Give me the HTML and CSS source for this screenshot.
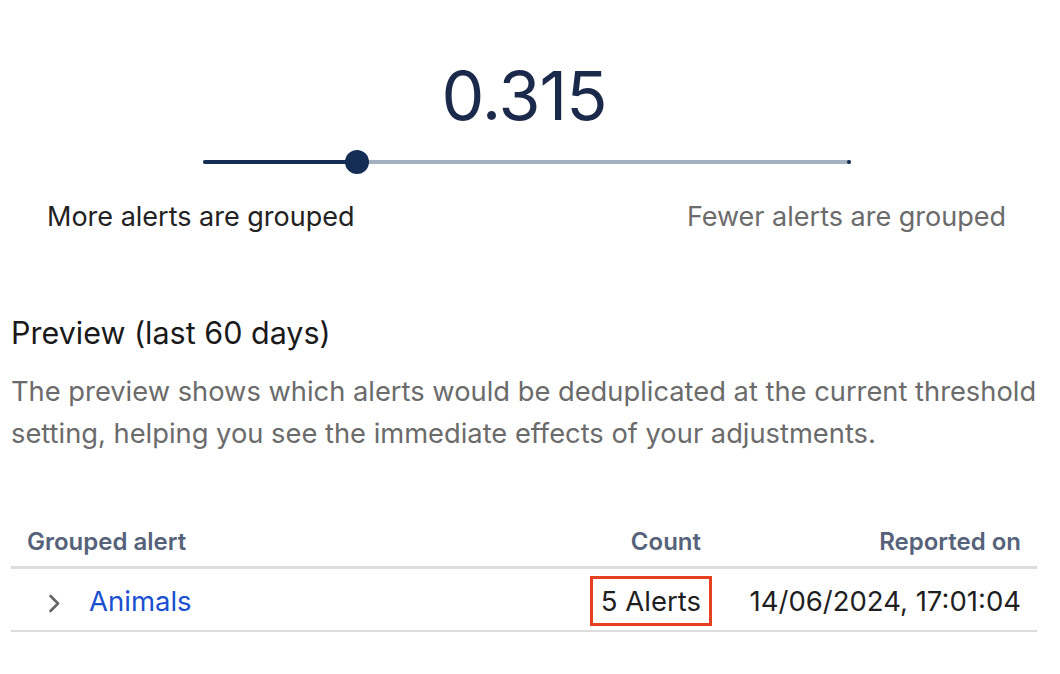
FILE: index.html
```html
<!DOCTYPE html>
<html lang="en">
<head>
<meta charset="utf-8">
<title>Threshold</title>
<link rel="stylesheet" href="styles.css">
</head>
<body>
<main class="page">
  <section class="threshold">
    <div class="value">0.315</div>
    <div class="slider">
      <div class="track">
        <div class="fill" style="width: 23.8%"></div>
        <div class="thumb" style="left: 23.8%"></div>
        <div class="end-dot"></div>
      </div>
    </div>
    <div class="labels">
      <span class="label-more">More alerts are grouped</span>
      <span class="label-fewer">Fewer alerts are grouped</span>
    </div>
  </section>

  <section class="preview">
    <h2 class="preview-title">Preview (last 60 days)</h2>
    <p class="preview-desc">The preview shows which alerts would be deduplicated at the current threshold setting, helping you see the immediate effects of your adjustments.</p>

    <table class="alerts">
      <thead>
        <tr>
          <th class="col-name">Grouped alert</th>
          <th class="col-count">Count</th>
          <th class="col-date">Reported on</th>
        </tr>
      </thead>
      <tbody>
        <tr>
          <td class="col-name"><span class="chevron"><svg width="12" height="19" viewBox="0 0 12 19"><path d="M2.5 2 L10 9.5 L2.5 17" fill="none" stroke="#666666" stroke-width="2.6" stroke-linecap="round" stroke-linejoin="round"/></svg></span><a class="alert-link" href="#">Animals</a></td>
          <td class="col-count"><span class="count-box">5 Alerts</span></td>
          <td class="col-date">14/06/2024, 17:01:04</td>
        </tr>
      </tbody>
    </table>
  </section>
</main>
</body>
</html>
```

FILE: styles.css
```css
html, body {
  margin: 0;
  padding: 0;
  background: #ffffff;
}

body {
  font-family: "Inter", "Noto Sans", "Liberation Sans", sans-serif;
  color: #1f1f1f;
}

.page {
  padding: 0 23px 0 11px;
}

.threshold {
  display: flex;
  flex-direction: column;
  align-items: center;
  padding-top: 59px;
}

.value {
  font-size: 68px;
  line-height: 72px;
  color: #1b2a4a;
  font-weight: 400;
  letter-spacing: -1px;
}

.slider {
  width: 648px;
  margin-top: 29px;
  margin-left: 6px;
}

.track {
  position: relative;
  height: 4px;
  background: #a3b0bf;
  border-radius: 2px;
}

.fill {
  height: 4px;
  background: #142d54;
  border-radius: 2px;
}

.thumb {
  position: absolute;
  top: -10px;
  width: 24px;
  height: 24px;
  margin-left: -12px;
  border-radius: 50%;
  background: #142d54;
}

.end-dot {
  position: absolute;
  right: 0;
  top: 0;
  width: 4px;
  height: 4px;
  border-radius: 50%;
  background: #142d54;
}

.labels {
  align-self: stretch;
  display: flex;
  justify-content: space-between;
  padding: 0 31px 0 36px;
  margin-top: 37px;
  font-size: 27px;
  line-height: 32px;
}

.label-more {
  color: #222222;
}

.label-fewer {
  color: #6b6b6b;
}

.preview {
  margin-top: 82px;
}

.preview-title {
  margin: 0;
  font-size: 30.5px;
  line-height: 36px;
  font-weight: 400;
  color: #1a1a1a;
}

.preview-desc {
  margin: 20px -20px 0 0;
  font-size: 27.3px;
  line-height: 42px;
  color: #6b6b6b;
}

.alerts {
  width: 100%;
  border-collapse: collapse;
  margin-top: 61px;
}

.alerts th {
  font-size: 24px;
  font-weight: 600;
  color: #56627a;
  padding: 12px 16px 10px;
  line-height: 28px;
  border-bottom: 3px solid #dddddd;
}

.alerts td {
  font-size: 27.5px;
  line-height: 28px;
  padding: 18px 16px 15px;
  border-bottom: 2px solid #dddddd;
  color: #1f1f1f;
}

.col-name {
  text-align: left;
}

.col-count {
  text-align: right;
}

.col-date {
  text-align: right;
  width: 288px;
}

.alerts td.col-name {
  padding-left: 37px;
}

.chevron {
  display: inline-block;
  width: 12px;
  height: 19px;
  vertical-align: -2px;
  margin-right: 29px;
}

.chevron svg {
  display: block;
}

.alert-link {
  color: #1a4fd0;
  text-decoration: none;
}

.count-box {
  display: inline-block;
  outline: 3px solid #e5401f;
  outline-offset: 8px;
}
```
